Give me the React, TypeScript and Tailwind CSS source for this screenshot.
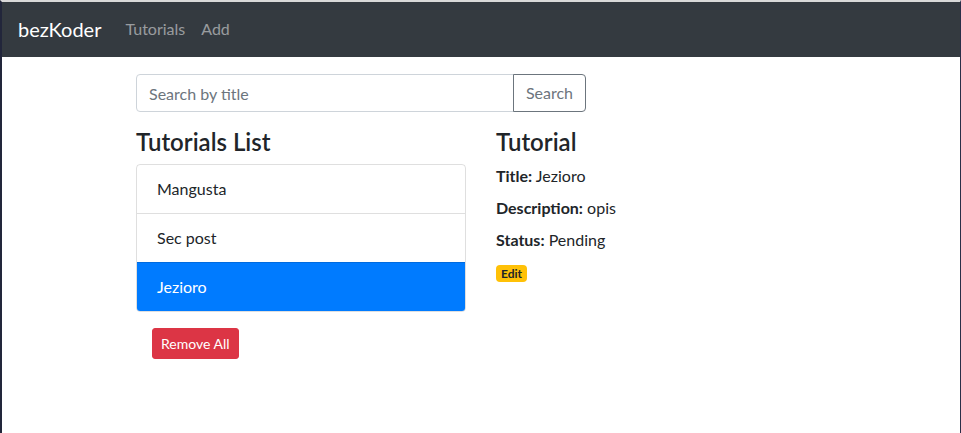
import { useState } from 'react';

const tutorials = [
  { id: 1, title: 'Mangusta', description: 'opis', published: false },
  { id: 2, title: 'Sec post', description: 'opis', published: false },
  { id: 3, title: 'Jezioro', description: 'opis', published: false },
];

export default function App() {
  const [activeIndex, setActiveIndex] = useState(2);
  const current = tutorials[activeIndex];

  return (
    <div className="h-[433px] overflow-hidden bg-white border-l-2 border-r border-t-2 border-l-[#22263b] border-r-[#2a2e48] border-t-[#d9d9d9] font-['Lato',sans-serif] text-[#212529]">
      {/* navbar */}
      <nav className="flex items-center h-[55px] px-4 bg-[#343a40]">
        <a className="text-[20px] leading-[30px] text-white mr-4 -mt-px">bezKoder</a>
        <div className="flex -mt-px">
          <a className="px-2 text-base text-white/50">Tutorials</a>
          <a className="px-2 text-base text-white/50">Add</a>
        </div>
      </nav>

      <div className="w-[720px] mx-auto px-[15px] mt-[17px]">
        <div className="flex flex-wrap">
          {/* search */}
          <div className="w-[450px] flex mb-4">
            <input
              className="flex-1 min-w-0 h-[38px] px-3 text-base border border-[#ced4da] rounded-l-[4px] placeholder:text-[#6c757d] outline-none"
              placeholder="Search by title"
            />
            <button className="h-[38px] px-3 text-base text-[#6c757d] border border-[#6c757d] rounded-r-[4px] -ml-px">
              Search
            </button>
          </div>
        </div>

        <div className="flex">
          <div className="w-[330px] mr-[30px]">
            <h4 className="text-[24px] leading-[28px] font-semibold mb-2">Tutorials List</h4>
            <ul className="border border-black/[0.125] rounded-[4px] overflow-hidden">
              {tutorials.map((t, i) => (
                <li
                  key={t.id}
                  onClick={() => setActiveIndex(i)}
                  className={`px-5 py-3 text-base leading-6 ${i > 0 ? 'border-t border-black/[0.125]' : ''} ${
                    i === activeIndex ? 'bg-[#007bff] text-white border-[#007bff]' : ''
                  }`}
                >
                  {t.title}
                </li>
              ))}
            </ul>
            <button className="m-4 px-2 py-1 text-sm leading-[21px] text-white bg-[#dc3545] border border-[#dc3545] rounded-[3px]">
              Remove All
            </button>
          </div>

          <div className="w-[330px]">
            <h4 className="text-[24px] leading-[28px] font-semibold mb-2">Tutorial</h4>
            <div className="text-base leading-6">
              <div className="mb-2">
                <strong className="font-bold">Title:</strong> {current.title}
              </div>
              <div className="mb-2">
                <strong className="font-bold">Description:</strong> {current.description}
              </div>
              <div className="mb-2">
                <strong className="font-bold">Status:</strong> {current.published ? 'Published' : 'Pending'}
              </div>
              <span className="inline-block px-[5px] py-[2px] text-[12px] leading-[13px] font-bold bg-[#ffc107] text-[#212529] rounded-[4px]">
                Edit
              </span>
            </div>
          </div>
        </div>
      </div>
    </div>
  );
}
